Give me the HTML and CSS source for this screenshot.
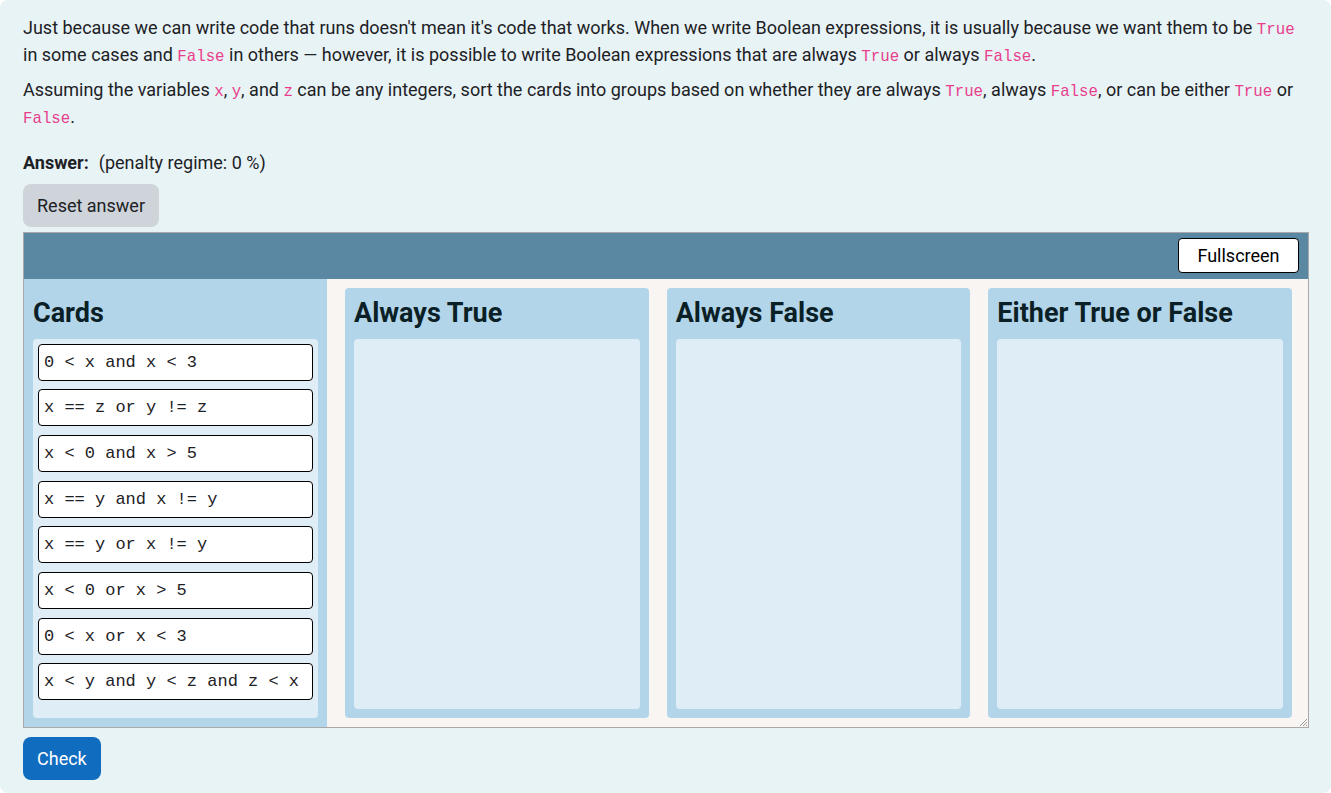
FILE: index.html
```html
<!DOCTYPE html>
<html lang="en">
<head>
<meta charset="utf-8">
<title>Boolean expressions</title>
<link rel="stylesheet" href="styles.css">
</head>
<body>
<div class="page">
  <p class="para">Just because we can write code that runs doesn't mean it's code that works. When we write Boolean expressions, it is usually because we want them to be <code>True</code> in some cases and <code>False</code> in others — however, it is possible to write Boolean expressions that are always <code>True</code> or always <code>False</code>.</p>
  <p class="para">Assuming the variables <code>x</code>, <code>y</code>, and <code>z</code> can be any integers, sort the cards into groups based on whether they are always <code>True</code>, always <code>False</code>, or can be either <code>True</code> or <code>False</code>.</p>
  <div class="answer-line"><b>Answer:</b><span class="penalty">(penalty regime: 0 %)</span></div>
  <button class="btn btn-reset">Reset answer</button>
  <div class="sorter">
    <div class="sorter-head"><button class="btn-full">Fullscreen</button></div>
    <div class="sorter-body">
      <div class="col col-cards">
        <h3 class="col-title">Cards</h3>
        <div class="zone zone-cards">
          <div class="card">0 &lt; x and x &lt; 3</div>
          <div class="card">x == z or y != z</div>
          <div class="card">x &lt; 0 and x &gt; 5</div>
          <div class="card">x == y and x != y</div>
          <div class="card">x == y or x != y</div>
          <div class="card">x &lt; 0 or x &gt; 5</div>
          <div class="card">0 &lt; x or x &lt; 3</div>
          <div class="card">x &lt; y and y &lt; z and z &lt; x</div>
        </div>
      </div>
      <div class="col col-group">
        <h3 class="col-title">Always True</h3>
        <div class="zone"></div>
      </div>
      <div class="col col-group">
        <h3 class="col-title">Always False</h3>
        <div class="zone"></div>
      </div>
      <div class="col col-group">
        <h3 class="col-title">Either True or False</h3>
        <div class="zone"></div>
      </div>
      <svg class="grip" width="9" height="9" viewBox="0 0 9 9"><path d="M8 1 L1 8 M8 4 L4 8 M8 7 L7 8" stroke="#9a9a9a" stroke-width="1"/></svg>
    </div>
  </div>
  <button class="btn btn-check">Check</button>
</div>
</body>
</html>
```
FILE: styles.css
```css
html, body {
  margin: 0;
  padding: 0;
  background: #ffffff;
}
body {
  font-family: Roboto, "Liberation Sans", Arial, sans-serif;
  font-size: 18px;
  line-height: 27px;
  color: #1d2125;
}
.page {
  box-sizing: border-box;
  height: 793px;
  background: #e7f3f5;
  border-radius: 8px;
  padding: 13.5px 22px 0 23px;
}
.para {
  margin: 0 0 8.5px 0;
}
code {
  font-family: "Liberation Mono", "Courier New", monospace;
  font-size: 15.75px;
  line-height: 1;
  color: #e83e8c;
}
.answer-line {
  margin-top: 19px;
  line-height: 27px;
}
.answer-line b {
  font-weight: 700;
}
.penalty {
  margin-left: 10px;
}
.btn {
  display: block;
  font-family: Roboto, "Liberation Sans", Arial, sans-serif;
  font-size: 18px;
  line-height: 27px;
  border: none;
  border-radius: 8px;
  padding: 8px 14px;
  cursor: pointer;
}
.btn-reset {
  margin-top: 7.5px;
  background: #ced4da;
  color: #1d2125;
}
.sorter {
  margin-top: 5px;
  border: 1px solid #a9a9a9;
  width: 1284px;
}
.sorter-head {
  height: 46px;
  background: #5a87a2;
  display: flex;
  justify-content: flex-end;
  align-items: flex-start;
  padding: 5px 9px 0 0;
  box-sizing: border-box;
}
.btn-full {
  font-family: Roboto, "Liberation Sans", Arial, sans-serif;
  font-size: 18px;
  height: 35px;
  width: 121px;
  background: #ffffff;
  color: #000;
  border: 1px solid #000;
  border-radius: 4px;
  padding: 0;
}
.sorter-body {
  position: relative;
  height: 448px;
  background: #f8f5f2;
  display: grid;
  grid-template-columns: 303px 1fr 1fr 1fr;
  column-gap: 18px;
  padding-right: 16px;
}
.col {
  background: #b3d5ea;
  display: flex;
  flex-direction: column;
  padding: 9px;
}
.col-cards {
  padding-top: 18px;
}
.col-group {
  margin: 9px 0;
  border-radius: 4px;
}
.col-title {
  margin: 0 0 10px 0;
  font-size: 27px;
  line-height: 32px;
  font-weight: 700;
  color: #0b1f26;
}
.zone {
  flex: 1;
  background: #dfedf6;
  border-radius: 4px;
}
.zone-cards {
  padding: 5px 5px 17px 5px;
  display: flex;
  flex-direction: column;
  gap: 8.7px;
}
.card {
  background: #ffffff;
  border: 1px solid #000;
  border-radius: 4px;
  padding: 5px 5px 4px 5px;
  font-family: "Liberation Mono", "Courier New", monospace;
  font-size: 17px;
  line-height: 26px;
  color: #1d2125;
  white-space: pre;
}
.grip {
  position: absolute;
  right: 0;
  bottom: 0;
}
.btn-check {
  margin-top: 9px;
  background: #0f6cbf;
  color: #ffffff;
}
```
